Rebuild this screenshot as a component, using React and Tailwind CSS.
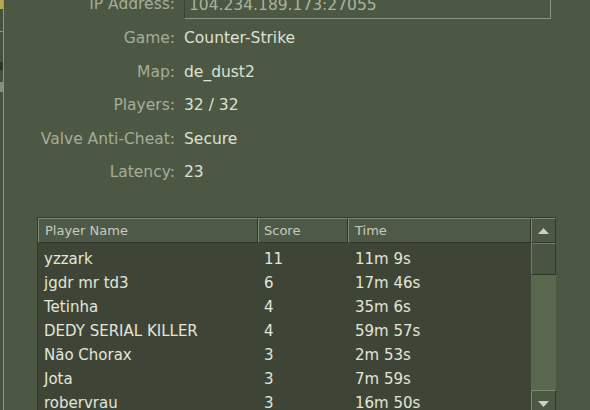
import React from "react";

const info = [
  ["Game:", "Counter-Strike"],
  ["Map:", "de_dust2"],
  ["Players:", "32 / 32"],
  ["Valve Anti-Cheat:", "Secure"],
  ["Latency:", "23"],
];

const players = [
  ["yzzark", "11", "11m 9s"],
  ["jgdr mr td3", "6", "17m 46s"],
  ["Tetinha", "4", "35m 6s"],
  ["DEDY SERIAL KILLER", "4", "59m 57s"],
  ["Não Chorax", "3", "2m 53s"],
  ["Jota", "3", "7m 59s"],
  ["robervrau", "3", "16m 50s"],
];

export default function App() {
  return (
    <div className="w-[590px] h-[410px] overflow-hidden bg-[#4c5844] flex font-['DejaVu_Sans',sans-serif] text-[15px] leading-none">
      {/* partial window behind */}
      <div className="w-[3px] h-full bg-[#46523f] flex flex-col">
        <div className="h-[9px] bg-[#b8a95a]" />
        <div className="h-[22px]" />
        <div className="h-px bg-[#8c9884]" />
        <div className="h-[30px]" />
        <div className="h-[8px] bg-[#2d3328]" />
        <div className="h-[12px]" />
        <div className="h-[10px] bg-[#b0b8a6] opacity-60" />
      </div>
      <div className="w-px h-full bg-[#8c9884]" />

      <div className="flex-1 flex flex-col">
        {/* info rows */}
        <div className="flex flex-col mt-[-8px] text-[15.5px]">
          <div className="flex items-start h-[30px]">
            <div className="w-[171px] h-[26px] flex items-center justify-end text-[#a5ad9a]">IP Address:</div>
            <div className="ml-[9px] w-[367px] h-[27px] flex items-center pl-[4px] border-l border-t border-[#3a4234] border-r-[#8a9682] border-b-[#8a9682] border-r border-b text-[#aab3a0]">
              104.234.189.173:27055
            </div>
          </div>
          {info.map(([l, v]) => (
            <div key={l} className="flex items-center h-[33.5px]">
              <div className="w-[171px] text-right text-[#a5ad9a] whitespace-nowrap">{l}</div>
              <div className="ml-[9px] text-[#dde1d5]">{v}</div>
            </div>
          ))}
        </div>

        {/* player table */}
        <div className="ml-[33px] mt-[27.5px] w-[519px] flex border-l border-t border-[#343b2e]">
          <div className="flex-1 flex flex-col">
            <div className="grid grid-cols-[220px_90px_1fr] h-[25px] text-[13px] text-[#c6ccbd]">
              <div className="flex items-center pl-[6px] border-t border-l border-[#7d8a72] border-r border-r-[#2f3529] border-b border-b-[#2f3529] bg-[#4e5947]">Player Name</div>
              <div className="flex items-center pl-[5px] border-t border-l border-[#7d8a72] border-r border-r-[#2f3529] border-b border-b-[#2f3529] bg-[#4e5947]">Score</div>
              <div className="flex items-center pl-[6px] border-t border-l border-[#7d8a72] border-r border-r-[#2f3529] border-b border-b-[#2f3529] bg-[#4e5947]">Time</div>
            </div>
            <div className="bg-[#3e4537] pt-[4px] h-[200px] text-[#e2e6da]">
              {players.map(([n, s, t]) => (
                <div key={n} className="grid grid-cols-[220px_90px_1fr] h-[24px] items-center">
                  <div className="pl-[6px] whitespace-nowrap">{n}</div>
                  <div className="pl-[6px]">{s}</div>
                  <div className="pl-[7px]">{t}</div>
                </div>
              ))}
            </div>
          </div>
          {/* scrollbar */}
          <div className="w-[25px] flex flex-col bg-[#5a6850]">
            <div className="h-[25px] flex items-center justify-center bg-[#4c5744] border-t border-l border-[#7d8a72] border-r border-r-[#2f3529] border-b border-b-[#2f3529]">
              <svg width="11" height="6" viewBox="0 0 11 6"><polygon points="5.5,0 11,6 0,6" fill="#c9d0c0" /></svg>
            </div>
            <div className="h-[32px] bg-[#4a5443] border-t border-l border-[#6f7c66] border-r border-r-[#2f3529] border-b border-b-[#2f3529]" />
            <div className="h-[115px]" />
            <div className="h-[26px] flex items-center justify-center bg-[#4c5744] border-t border-l border-[#7d8a72] border-r border-r-[#2f3529]">
              <svg width="11" height="6" viewBox="0 0 11 6"><polygon points="0,0 11,0 5.5,6" fill="#c9d0c0" /></svg>
            </div>
          </div>
        </div>
      </div>
    </div>
  );
}
